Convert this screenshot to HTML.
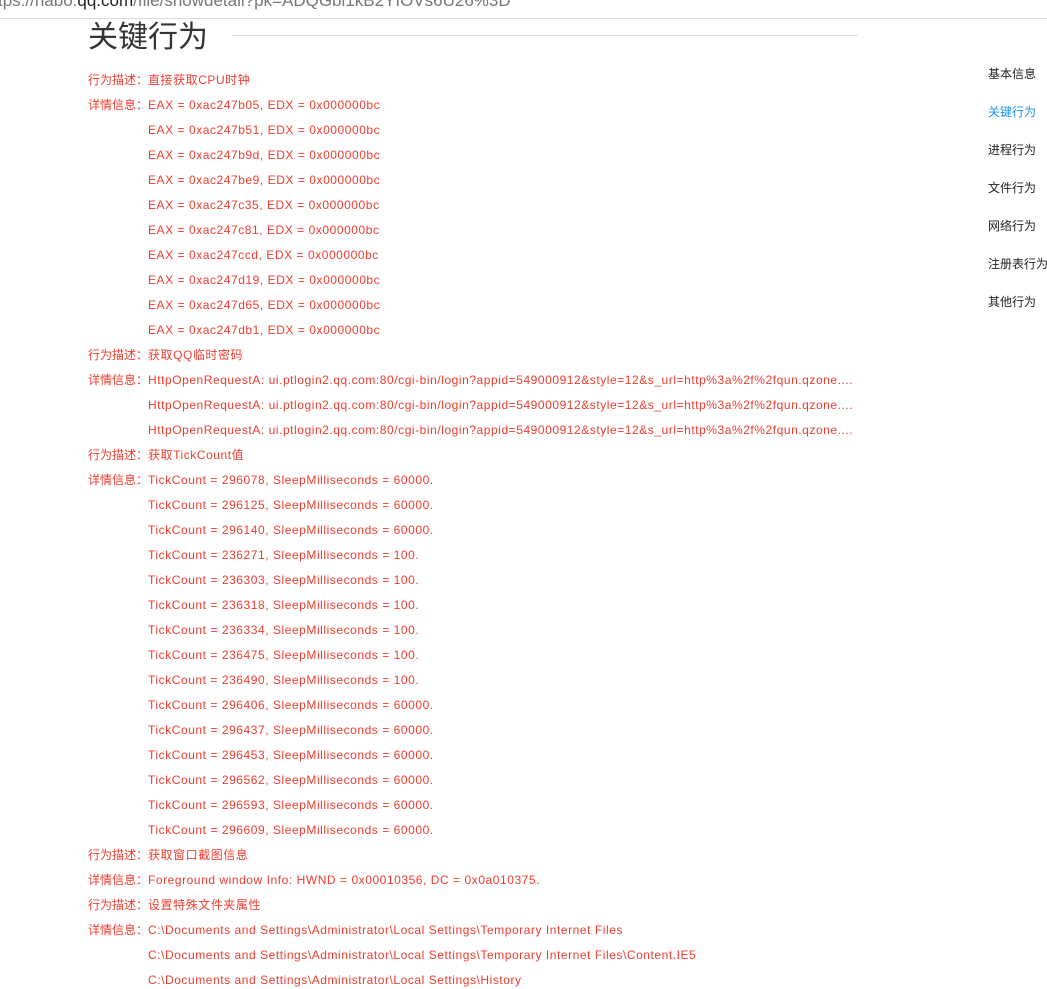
<!DOCTYPE html>
<html><head><meta charset="utf-8"><style>
body{margin:0;width:1047px;height:989px;overflow:hidden;background:#fff;font-family:"Liberation Sans","Noto Sans CJK SC",sans-serif;position:relative}
.url{position:absolute;left:-2px;top:-9px;font-size:17px;color:#777;white-space:nowrap}
.url b{font-weight:normal;color:#222}
.bar{position:absolute;left:0;right:0;top:18px;border-top:1px solid #ddd}
h1{position:absolute;left:88px;top:18px;margin:0;font-weight:normal;font-size:30px;line-height:40px;color:#333}
.hl{position:absolute;left:232px;top:35px;width:626px;border-top:1px solid #ddd}
.r{position:absolute;font-size:12px;color:#f03c2e;white-space:nowrap;line-height:16px}
.v{letter-spacing:0.55px}
.nav{position:absolute;left:988px;font-size:12px;color:#222;white-space:nowrap;line-height:16px}
</style></head><body>
<div class="url">tps://habo.<b>qq.com</b>/file/showdetail?pk=ADQGbl1kB2YIOVs6U26%3D</div>
<div class="bar"></div>
<h1>关键行为</h1><div class="hl"></div>
<div class="nav" style="top:66px">基本信息</div>
<div class="nav" style="top:104px;color:#1e90e8">关键行为</div>
<div class="nav" style="top:142px">进程行为</div>
<div class="nav" style="top:180px">文件行为</div>
<div class="nav" style="top:218px">网络行为</div>
<div class="nav" style="top:256px">注册表行为</div>
<div class="nav" style="top:294px">其他行为</div>
<div id="c"></div>
<script>
var rows=[
["行为描述：","直接获取CPU时钟"],
["详情信息：","EAX = 0xac247b05, EDX = 0x000000bc"],
["","EAX = 0xac247b51, EDX = 0x000000bc"],
["","EAX = 0xac247b9d, EDX = 0x000000bc"],
["","EAX = 0xac247be9, EDX = 0x000000bc"],
["","EAX = 0xac247c35, EDX = 0x000000bc"],
["","EAX = 0xac247c81, EDX = 0x000000bc"],
["","EAX = 0xac247ccd, EDX = 0x000000bc"],
["","EAX = 0xac247d19, EDX = 0x000000bc"],
["","EAX = 0xac247d65, EDX = 0x000000bc"],
["","EAX = 0xac247db1, EDX = 0x000000bc"],
["行为描述：","获取QQ临时密码"],
["详情信息：","HttpOpenRequestA: ui.ptlogin2.qq.com:80/cgi-bin/login?appid=549000912&style=12&s_url=http%3a%2f%2fqun.qzone...."],
["","HttpOpenRequestA: ui.ptlogin2.qq.com:80/cgi-bin/login?appid=549000912&style=12&s_url=http%3a%2f%2fqun.qzone...."],
["","HttpOpenRequestA: ui.ptlogin2.qq.com:80/cgi-bin/login?appid=549000912&style=12&s_url=http%3a%2f%2fqun.qzone...."],
["行为描述：","获取TickCount值"],
["详情信息：","TickCount = 296078, SleepMilliseconds = 60000."],
["","TickCount = 296125, SleepMilliseconds = 60000."],
["","TickCount = 296140, SleepMilliseconds = 60000."],
["","TickCount = 236271, SleepMilliseconds = 100."],
["","TickCount = 236303, SleepMilliseconds = 100."],
["","TickCount = 236318, SleepMilliseconds = 100."],
["","TickCount = 236334, SleepMilliseconds = 100."],
["","TickCount = 236475, SleepMilliseconds = 100."],
["","TickCount = 236490, SleepMilliseconds = 100."],
["","TickCount = 296406, SleepMilliseconds = 60000."],
["","TickCount = 296437, SleepMilliseconds = 60000."],
["","TickCount = 296453, SleepMilliseconds = 60000."],
["","TickCount = 296562, SleepMilliseconds = 60000."],
["","TickCount = 296593, SleepMilliseconds = 60000."],
["","TickCount = 296609, SleepMilliseconds = 60000."],
["行为描述：","获取窗口截图信息"],
["详情信息：","Foreground window Info: HWND = 0x00010356, DC = 0x0a010375."],
["行为描述：","设置特殊文件夹属性"],
["详情信息：","C:\\Documents and Settings\\Administrator\\Local Settings\\Temporary Internet Files"],
["","C:\\Documents and Settings\\Administrator\\Local Settings\\Temporary Internet Files\\Content.IE5"],
["","C:\\Documents and Settings\\Administrator\\Local Settings\\History"]];
var h="";
rows.forEach(function(r,i){var t=72+i*25;
if(r[0])h+='<div class="r" style="left:88px;top:'+t+'px">'+r[0]+'</div>';
var d=document.createElement('div');d.textContent=r[1];
h+='<div class="r v" style="left:148px;top:'+t+'px">'+d.innerHTML+'</div>';});
document.getElementById('c').innerHTML=h;
</script>
</body></html>
